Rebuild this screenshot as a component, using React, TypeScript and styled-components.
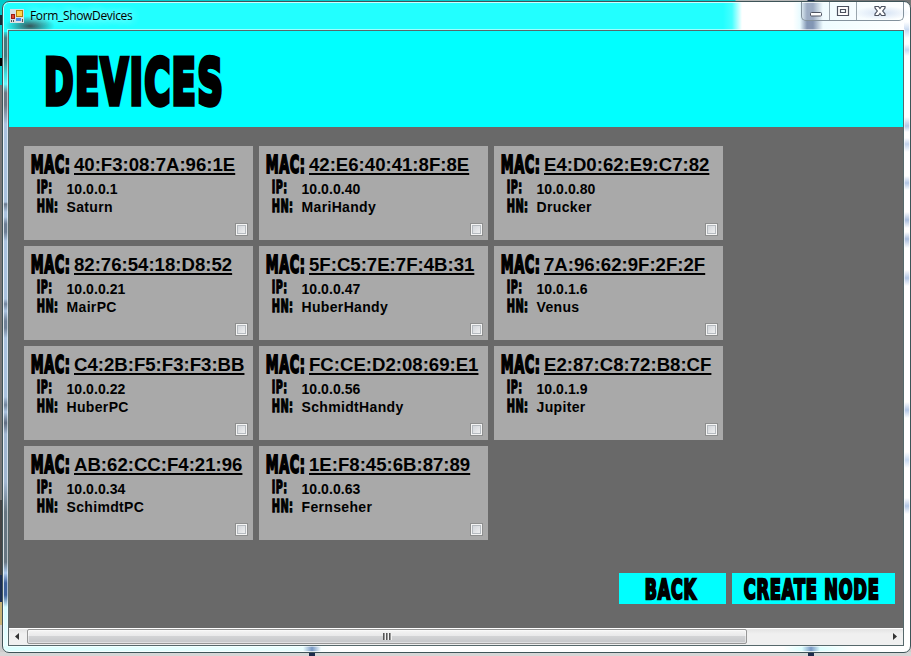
import React from "react";
import styled, { createGlobalStyle } from "styled-components";

const Global = createGlobalStyle`
  * { box-sizing: border-box; }
  body { margin: 0; overflow: hidden; font-family: "Liberation Sans", Arial, sans-serif; color: #000; }
`;

const Desktop = styled.div`
  width: 911px;
  height: 656px;
  padding: 1px 0 3px 2px;
  background:
    linear-gradient(90deg, transparent 309px, #1d2c4c 309px 315px, transparent 315px 808px, #1d2c4c 808px 814px, transparent 814px) 0 652px / 911px 4px no-repeat,
    linear-gradient(#d6d6d6, #d6d6d6) 0 652px / 911px 4px no-repeat,
    linear-gradient(90deg, #00cccc 735px, #b8b8b8 736px 807px, #1d2c4c 808px 814px, #777 815px) 0 0 / 911px 10px no-repeat,
    linear-gradient(#00cccc 0 15px, #102c34 15px 25px, #00cccc 25px 58px, #000 58px 66px, #00cccc 66px 85px, #777 85px 500px, #454545 500px 575px, #1b2e53 575px 602px, #c7b276 602px 625px, #ccc 625px);
`;

const Window = styled.div`
  position: relative;
  width: 909px;
  height: 652px;
  padding: 0 6px 6px 5px;
  display: flex;
  flex-direction: column;
  border: 1px solid #3e5458;
  border-radius: 7px;
  box-shadow: inset 0 0 0 1px #ffffffc0;
  background:
    linear-gradient(90deg, transparent 300px, #7898c4 309px, transparent 318px 799px, #7898c4 808px, transparent 817px) 0 644px / 909px 6px no-repeat,
    linear-gradient(90deg, #dcffff, #eaffff 300px, #fff 330px 780px, #dcffff 800px 815px, #fff 850px) 0 644px / 909px 6px no-repeat,
    linear-gradient(transparent 20px, #c8daf2 28px, transparent 36px 42px, #c8daf2 48px, transparent 54px 115px, #b3c7e6 124px, transparent 130px 136px, #c3d3ed 142px, transparent 150px 174px, #b3c7e6 181px, transparent 188px 210px, #a9bddd 218px, transparent 226px 230px, #a9bddd 237px, transparent 246px 268px, #b3c7e6 276px, transparent 284px 400px, #b3c7e6 408px, transparent 416px 450px, #c8daf2 458px, transparent 466px 496px, #b3c7e6 504px, transparent 512px) 901px 0 / 8px 644px no-repeat,
    radial-gradient(ellipse at center, #37565a 0, transparent 70%) 2px 14px / 50px 20px no-repeat,
    radial-gradient(ellipse at center, #c9daf2 0, transparent 70%) 850px 4px / 58px 14px no-repeat,
    linear-gradient(90deg, #2ff 720px, #45ffff 729px, #fff 739px 790px, #e9fbff 797px, #8296b4 804px 810px, #eefcff 820px, #fff) 0 0 / 909px 30px no-repeat,
    linear-gradient(#2ff 28px, #427c80 36px 54px, #40dede 72px, #64f7fa 82px, #6b7885 91px 103px, #a9c3df 122px 200px, #68798d 202px, #a9c3df 210px 215px, #6b7e94 222px 230px, #a9c3df 239px 297px, #70849b 302px, #a9c3df 309px, #6f8298 319px 326px, #a9c3df 336px 395px, #70849b 403px, #a9c3df 410px, #5e6d81 421px, #a0b7d1 432px 480px, #657681 510px 560px, #a9c9ee 571px, #3e629b 581px 593px, #d4fbff 605px, #eaffff) 0 0 / 8px 650px no-repeat,
    #fff;
`;

const TitleBar = styled.header`
  height: 28px;
  flex: none;
  display: flex;
  align-items: flex-start;
  padding-left: 2px;
`;

const AppIcon = styled.svg`
  width: 14px;
  height: 14px;
  margin-top: 7px;
`;

const Title = styled.span`
  margin: 6px 0 0 6px;
  font: 12px/15px "Open Sans", "Noto Sans", sans-serif;
  letter-spacing: -0.34px;
  text-shadow: 0 0 8px #ffffffa0, 0 0 8px #ffffffa0;
`;

const Controls = styled.div`
  display: flex;
  margin-left: auto;
  height: 19px;
  width: 103px;
  border: 1px solid #83929d;
  border-top: 0;
  border-radius: 0 0 5px 5px;
  background: #ffffff38;
`;

const Control = styled.button<{ $w: number }>`
  width: ${(p) => p.$w}px;
  padding: 0;
  border: 0;
  background: none;
  display: flex;
  & + & { border-left: 1px solid #9aa6ae; }
  svg { width: 100%; height: 18px; }
`;

const Client = styled.main`
  width: 896px;
  height: 616px;
  border: 1px solid #56686b;
  box-shadow: 0 0 0 1px #ffffff90;
  display: flex;
  flex-direction: column;
  background: #696969;
`;

const Banner = styled.div`
  height: 96px;
  padding: 25px 0 0 36px;
  background: #0ff;
`;

const Body = styled.section`
  height: 502px;
  padding: 19px 8px 24px 15px;
  display: flex;
  flex-direction: column;
  justify-content: space-between;
`;

const Grid = styled.div`
  display: grid;
  grid-template-rows: repeat(4, 94px);
  grid-auto-columns: 229px;
  grid-auto-flow: column;
  gap: 6px;
`;

const Card = styled.article`
  background: #a9a9a9;
  display: grid;
  grid-template-rows: 26px 19px 18px 1fr;
  padding: 8px 5px 4px 7px;
`;

const Line = styled.div`
  display: flex;
  align-items: flex-start;
`;

const LabelCell = styled.div<{ $w: number; $indent: number }>`
  width: ${(p) => p.$w}px;
  padding-left: ${(p) => p.$indent}px;
  flex: none;
`;

const Mac = styled.span`
  font: bold 18.6px/21px "Liberation Sans", Arial, sans-serif;
  text-decoration: underline;
  text-decoration-thickness: 2px;
  text-underline-offset: 2px;
  text-decoration-skip-ink: none;
  white-space: nowrap;
`;

const Value = styled.span<{ $spacing: number; $drop: number }>`
  margin-top: ${(p) => p.$drop}px;
  font: bold 14px/16px "Liberation Sans", Arial, sans-serif;
  letter-spacing: ${(p) => p.$spacing}px;
`;

const Check = styled.button`
  width: 13px;
  height: 13px;
  padding: 0;
  justify-self: end;
  align-self: end;
  border: 1px solid #8e8f8f;
  box-shadow: inset 0 0 0 1px #f4f4f4, inset 0 0 0 2px #b5babf;
  background: linear-gradient(135deg, #cbcfd5, #f6f6f6);
`;

const Actions = styled.footer`
  display: flex;
  justify-content: flex-end;
  gap: 6px;
`;

const Action = styled.button<{ $w: number; $left: number }>`
  width: ${(p) => p.$w}px;
  height: 31px;
  padding: 5px 0 0 ${(p) => p.$left}px;
  border: 0;
  background: #0ff;
  display: flex;
`;

const DisplayBox = styled.span<{ $w: number; $h: number }>`
  display: block;
  width: ${(p) => p.$w}px;
  height: ${(p) => p.$h}px;
  svg { display: block; overflow: visible; }
`;

const DisplayGlyphs = styled.text<{ $stroke: number }>`
  font-family: "DejaVu Sans", "Liberation Sans", sans-serif;
  font-weight: bold;
  fill: #000;
  stroke: #000;
  stroke-width: ${(p) => p.$stroke}px;
  stroke-linejoin: miter;
  letter-spacing: ${(p) => p.$stroke * 0.55}px;
`;

/* Heavy condensed lettering, fitted to a given width and capital height. */
function Display({ text, w, h, stroke }: { text: string; w: number; h: number; stroke: number }) {
  const squeeze = 0.5;
  const size = (h - stroke) / 0.729;
  const bearing = size * 0.065;
  return (
    <DisplayBox $w={w} $h={h}>
      <svg width={w} height={h} role="img" aria-label={text}>
        <g transform={`scale(${squeeze} 1)`}>
          <DisplayGlyphs
            $stroke={stroke}
            x={stroke / 2 - bearing}
            y={h - stroke / 2}
            fontSize={size}
            textLength={w / squeeze - stroke * 0.4 + bearing * 1.6}
            lengthAdjust="spacingAndGlyphs"
          >
            {text}
          </DisplayGlyphs>
        </g>
      </svg>
    </DisplayBox>
  );
}

const ScrollBar = styled.div`
  height: 17px;
  flex: none;
  display: flex;
  justify-content: space-between;
  border-top: 1px solid #fff;
  background: linear-gradient(#e4e4e4, #f0f0f0 5px);
`;

const ScrollArrow = styled.svg`
  width: 18px;
  height: 16px;
  flex: none;
`;

const Thumb = styled.div`
  width: 720px;
  height: 15px;
  margin-right: auto;
  display: flex;
  justify-content: center;
  align-items: center;
  border: 1px solid #979797;
  border-radius: 2px;
  background: linear-gradient(#f5f5f5, #e8e8e9 48%, #d2d3d5 50%, #c5c6c9);
  box-shadow: inset 0 0 0 1px #ffffff70;
`;

const Grip = styled.div`
  width: 9px;
  height: 7px;
  background: repeating-linear-gradient(90deg, #555 0 1px, #999 1px 2px, #f2f2f2 2px 3px);
`;

const devices = [
  ["40:F3:08:7A:96:1E", "10.0.0.1", "Saturn"],
  ["82:76:54:18:D8:52", "10.0.0.21", "MairPC"],
  ["C4:2B:F5:F3:F3:BB", "10.0.0.22", "HuberPC"],
  ["AB:62:CC:F4:21:96", "10.0.0.34", "SchimdtPC"],
  ["42:E6:40:41:8F:8E", "10.0.0.40", "MariHandy"],
  ["5F:C5:7E:7F:4B:31", "10.0.0.47", "HuberHandy"],
  ["FC:CE:D2:08:69:E1", "10.0.0.56", "SchmidtHandy"],
  ["1E:F8:45:6B:87:89", "10.0.0.63", "Fernseher"],
  ["E4:D0:62:E9:C7:82", "10.0.0.80", "Drucker"],
  ["7A:96:62:9F:2F:2F", "10.0.1.6", "Venus"],
  ["E2:87:C8:72:B8:CF", "10.0.1.9", "Jupiter"],
];

function DeviceCard({ mac, ip, host }: { mac: string; ip: string; host: string }) {
  return (
    <Card>
      <Line>
        <LabelCell $w={43} $indent={0}><Display text="MAC:" w={39} h={20} stroke={2} /></LabelCell>
        <Mac>{mac}</Mac>
      </Line>
      <Line>
        <LabelCell $w={35.5} $indent={6}><Display text="IP:" w={15} h={14} stroke={1.3} /></LabelCell>
        <Value $spacing={0.05} $drop={1}>{ip}</Value>
      </Line>
      <Line>
        <LabelCell $w={35.5} $indent={6}><Display text="HN:" w={21} h={14} stroke={1.3} /></LabelCell>
        <Value $spacing={0.34} $drop={0}>{host}</Value>
      </Line>
      <Check aria-label="Select device" />
    </Card>
  );
}

export default function App() {
  return (
    <>
      <Global />
      <Desktop>
        <Window>
          <TitleBar>
            <AppIcon viewBox="0 0 14 14">
              <rect width="14" height="14" fill="#d9e0e4" />
              <rect x="6.5" y="1.5" width="6" height="6" fill="#ffd34f" stroke="#b57b08" />
              <rect x="1.5" y="5.5" width="3" height="4" fill="#e44630" stroke="#9e1e14" />
              <rect x="6" y="9" width="5" height="3" fill="#4e8be8" />
              <path d="M1 11h1v2H1zM3 11h1v2H3zM12 10h1v3h-1z" fill="#555" />
            </AppIcon>
            <Title>Form_ShowDevices</Title>
            <Controls>
              <Control $w={27} aria-label="Minimize">
                <svg viewBox="0 0 27 18"><rect x="8.5" y="10.5" width="11" height="3.500" rx="1" fill="#fff" stroke="#4c5260" /></svg>
              </Control>
              <Control $w={27} aria-label="Maximize">
                <svg viewBox="0 0 26 18"><path d="M7.500 4.500h11v9h-11zM10.500 7.500h5v3h-5z" fill="#fff" fillRule="evenodd" stroke="#4c5260" strokeWidth="1.200" /></svg>
              </Control>
              <Control $w={47} aria-label="Close">
                <svg viewBox="0 0 46 18"><path d="M18 4.500h3.500l1.500 2 1.500-2H28v1.500l-2.300 3 2.300 3v1.500h-3.500l-1.500-2-1.500 2H18V12l2.300-3L18 6z" fill="#fff" stroke="#4c5260" strokeWidth="1.200" /></svg>
              </Control>
            </Controls>
          </TitleBar>
          <Client>
            <Banner><Display text="DEVICES" w={178} h={51} stroke={5.5} /></Banner>
            <Body>
              <Grid>
                {devices.map(([mac, ip, host]) => <DeviceCard key={mac} mac={mac} ip={ip} host={host} />)}
              </Grid>
              <Actions>
                <Action $w={107} $left={26}><Display text="BACK" w={51} h={22} stroke={2.3} /></Action>
                <Action $w={163} $left={12}><Display text="CREATE NODE" w={135} h={22} stroke={2.3} /></Action>
              </Actions>
            </Body>
            <ScrollBar>
              <ScrollArrow viewBox="0 0 18 16"><path d="M10 4v7l-4-3.500z" fill="#333" /></ScrollArrow>
              <Thumb><Grip /></Thumb>
              <ScrollArrow viewBox="0 0 18 16"><path d="M8 4v7l4-3.500z" fill="#333" /></ScrollArrow>
            </ScrollBar>
          </Client>
        </Window>
      </Desktop>
    </>
  );
}
